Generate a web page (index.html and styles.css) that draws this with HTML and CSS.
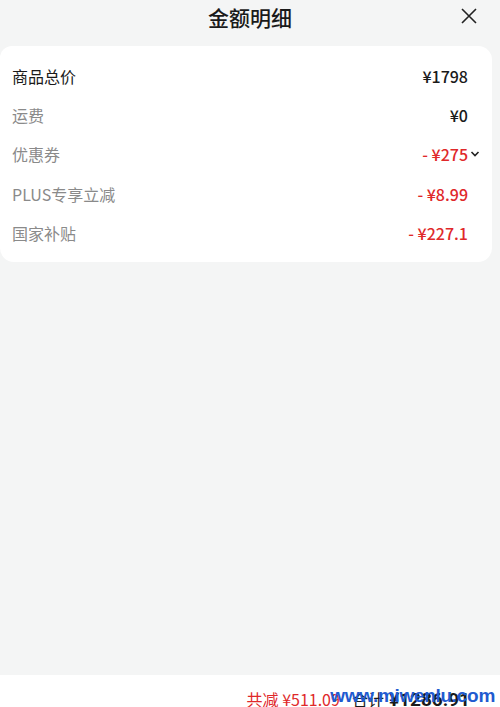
FILE: index.html
```html
<!DOCTYPE html>
<html lang="zh-CN">

<head>
    <meta charset="UTF-8">
    <meta name="viewport" content="width=device-width, initial-scale=1.0">
    <title>金额明细</title>
    <link rel="stylesheet" href="styles.css">
</head>

<body>
    <div class="sheet">
        <div class="sheet-header">
            <h1 class="sheet-title">金额明细</h1>
            <button class="close-button" aria-label="关闭">
                <svg width="16" height="16" viewBox="0 0 16 16">
                    <path d="M1 1 L15 15 M15 1 L1 15" stroke="#222" stroke-width="1.6" fill="none" />
                </svg>
            </button>
        </div>

        <div class="detail-card">
            <div class="detail-row">
                <span class="label label-main">商品总价</span>
                <span class="value">¥1798</span>
            </div>
            <div class="detail-row">
                <span class="label">运费</span>
                <span class="value">¥0</span>
            </div>
            <div class="detail-row">
                <span class="label">优惠券</span>
                <span class="value value-off">- ¥275<svg class="chevron" width="10" height="8" viewBox="0 0 10 8">
                        <path d="M1.5 2 L5 5.5 L8.5 2" stroke="#222" stroke-width="1.6" fill="none" />
                    </svg></span>
            </div>
            <div class="detail-row">
                <span class="label">PLUS专享立减</span>
                <span class="value value-off">- ¥8.99</span>
            </div>
            <div class="detail-row">
                <span class="label">国家补贴</span>
                <span class="value value-off">- ¥227.1</span>
            </div>
        </div>

        <div class="spacer"></div>

        <div class="total-bar">
            <span class="total-off">共减 ¥511.09</span>
            <span class="total-label">合计</span>
            <span class="total-amount">¥1286.91</span>
            <span class="watermark">www.miwenlu.com</span>
        </div>
    </div>
</body>

</html>
```

FILE: styles.css
```css
html,
body {
    margin: 0;
    height: 100%;
    overflow: hidden;
}

body {
    background-color: #f4f5f5;
    font-family: "Noto Sans CJK SC", "Noto Sans", sans-serif;
    color: #1a1a1a;
}

.sheet {
    display: flex;
    flex-direction: column;
    height: 707px;
}

.sheet-header {
    position: relative;
    height: 34px;
    display: flex;
    justify-content: center;
    align-items: center;
}

.sheet-title {
    margin: 0;
    font-size: 21px;
    font-weight: 500;
    line-height: 34px;
}

.close-button {
    position: absolute;
    right: 23px;
    top: 8px;
    padding: 0;
    border: none;
    background: none;
    width: 16px;
    height: 16px;
}

.detail-card {
    margin: 12px 8px 0 0;
    padding: 10px 0;
    background-color: #fff;
    border-radius: 12px 14px 14px 14px;
}

.detail-row {
    display: flex;
    justify-content: space-between;
    align-items: center;
    height: 39.3px;
    padding: 0 24px 0 12px;
}

.label {
    font-size: 16px;
    color: #8a8a8a;
}

.label-main {
    color: #1a1a1a;
}

.value {
    position: relative;
    font-size: 16px;
    font-weight: 500;
    color: #1a1a1a;
}

.value-off {
    color: #e0282a;
}

.chevron {
    position: absolute;
    right: -12px;
    top: 8px;
}

.spacer {
    flex: 1;
}

.total-bar {
    position: relative;
    flex: 0 0 50px;
    display: flex;
    align-items: baseline;
    padding: 12px 30px 0 0;
    box-sizing: border-box;
    background-color: #fff;
    margin-bottom: -18px;
    justify-content: flex-end;
}

.total-off {
    font-size: 16px;
    color: #e0282a;
    margin-right: 12px;
}

.total-label {
    font-size: 16px;
    margin-right: 5px;
}

.total-amount {
    font-family: Roboto, sans-serif;
    font-size: 19px;
    font-weight: 700;
}

.watermark {
    position: absolute;
    right: 5px;
    top: 10px;
    font-family: "Liberation Sans", sans-serif;
    font-size: 19px;
    font-weight: 700;
    color: #1f5bd0;
    letter-spacing: -0.3px;
}
```
